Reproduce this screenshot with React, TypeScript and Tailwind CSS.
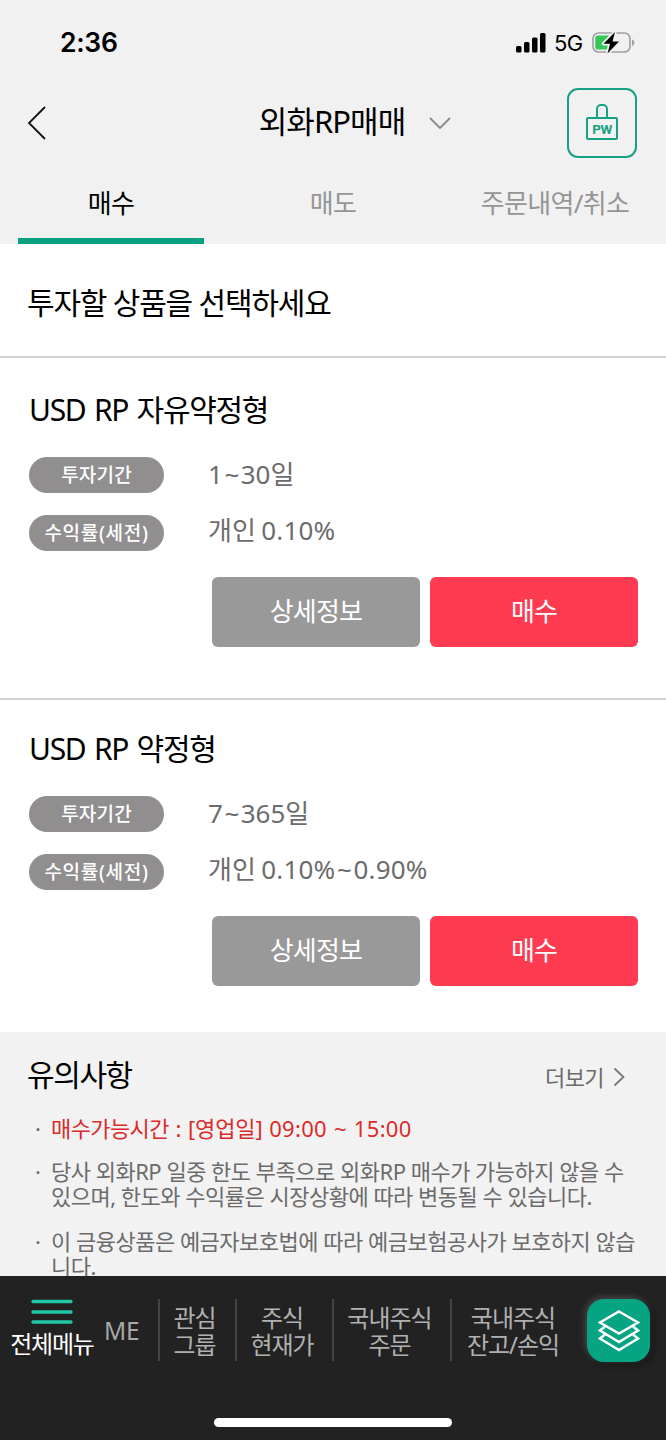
import { clsx } from "clsx";

const tabs = [
  { name: "매수", width: "w-[186px]", active: true },
  { name: "매도", width: "w-[258px]", active: false },
  { name: "주문내역/취소", width: "w-[186px]", active: false },
];

const products = [
  { name: "USD RP 자유약정형", period: "1~30일", rate: "개인 0.10%" },
  { name: "USD RP 약정형", period: "7~365일", rate: "개인 0.10%~0.90%" },
];

const shortcuts = [
  { lines: ["관심", "그룹"], width: "w-[77px] pr-[6px]" },
  { lines: ["주식", "현재가"], width: "w-[97px] pr-[5px]" },
  { lines: ["국내주식", "주문"], width: "w-[118px] pr-[5px]" },
  { lines: ["국내주식", "잔고/손익"], width: "w-[126px] pr-[2px]" },
];

function StatusBar() {
  return (
    <div className="flex h-[86px] items-center justify-between pr-[30px] pl-[60px] font-['Inter',sans-serif] text-black">
      <span className="pb-px text-[26.5px] font-semibold leading-none tracking-[-0.3px]">2:36</span>
      <div className="flex items-center">
        <svg width="30" height="20" viewBox="0 0 30 20" fill="currentColor">
          <rect x="0" y="13" width="5.5" height="6.5" rx="1.5" />
          <rect x="8" y="9" width="5.5" height="10.5" rx="1.5" />
          <rect x="16" y="4.5" width="5.5" height="15" rx="1.5" />
          <rect x="24" y="0" width="5.5" height="19.5" rx="1.5" />
        </svg>
        <span className="ml-[8px] w-[38px] text-[22px] leading-none tracking-[-0.6px]">5G</span>
        <svg width="44" height="24" viewBox="0 0 44 24" fill="none">
          <rect x="1" y="2" width="37" height="19" rx="5.5" stroke="#a0a0a0" strokeWidth="1.6" />
          <path d="M40 8.5v6.5c1.6-.6 2.3-1.8 2.3-3.2S41.6 9.1 40 8.5z" fill="#a0a0a0" />
          <rect x="3.2" y="4.5" width="16" height="14" rx="2.8" fill="#34c759" />
          <path d="M23 1 11.500 12.800H18L15.500 22.500 27 10.500H20.500L23 1z" fill="#000" stroke="#f1f1f1" strokeWidth="3.4" paintOrder="stroke" strokeLinejoin="round" />
        </svg>
      </div>
    </div>
  );
}

function Header() {
  return (
    <header className="flex h-[74px] items-center justify-between pr-[29px] pl-[27px]">
      <svg width="70" height="36" viewBox="0 0 70 36" fill="none" stroke="#111" strokeWidth="1.8">
        <path d="M18 2 2 18l16 16" />
      </svg>
      <h1 className="flex items-center pb-[4px] pl-[46px] text-[31px] leading-none tracking-[-0.9px] text-black">
        외화RP매매
        <svg className="mt-[4px] ml-[24px]" width="22" height="14" viewBox="0 0 22 14" fill="none" stroke="#8a8a8a" strokeWidth="1.8">
          <path d="m1 2 10 10L21 2" />
        </svg>
      </h1>
      <button className="flex size-[70px] items-center justify-center rounded-[11px] border-2 border-[#17a184]">
        <svg className="mb-[3px]" width="32" height="37" viewBox="0 0 32 37" fill="none" stroke="#17a184" strokeWidth="2">
          <path d="M11 14.5V6a4 4 0 0 1 4-4h2a4 4 0 0 1 4 4v8.5" />
          <rect x="1" y="15" width="30" height="21" rx="1" />
          <text x="16" y="30.5" textAnchor="middle" fontSize="13.5" fontWeight="700" letterSpacing="-0.4" fontFamily="Roboto, sans-serif" fill="#17a184" stroke="none">
            PW
          </text>
        </svg>
      </button>
    </header>
  );
}

function Tabs() {
  return (
    <nav className="flex h-[84px] px-[18px] text-[26px] tracking-[-0.7px]">
      {tabs.map((tab) => (
        <a
          key={tab.name}
          href="#"
          className={clsx(
            "flex items-center justify-center border-b-[6px] pt-[8px] leading-none whitespace-nowrap",
            tab.width,
            tab.active ? "border-[#0aa183] text-black" : "border-transparent text-[#959595]",
          )}
        >
          {tab.name}
        </a>
      ))}
    </nav>
  );
}

function Badge({ children }: { children: string }) {
  return (
    <span
      className={clsx(
        "flex h-9 w-[135px] items-center justify-center rounded-full bg-[#908e8f] text-[19px] font-medium leading-none text-white",
        children.length > 4 ? "tracking-[0.7px]" : "tracking-[0.2px]",
      )}
    >
      {children}
    </span>
  );
}

// the tilde gets a little room on both sides
function Range({ children }: { children: string }) {
  const [from, to] = children.split("~");
  return (
    <>
      {from}
      {to && <span className="mx-[1.5px]">~</span>}
      {to}
    </>
  );
}

function Product({ name, period, rate }: { name: string; period: string; rate: string }) {
  return (
    <section className="px-[29px] pt-[35px]">
      <h2 className="text-[30px] leading-[34px] tracking-[-1.3px] [word-spacing:2px] text-black">{name}</h2>
      <div className="mt-[30px] flex h-9 items-center">
        <Badge>투자기간</Badge>
        <span className="ml-[44px] pb-[2px] text-[26px] leading-none text-[#6c6c6c]">
          <Range>{period}</Range>
        </span>
      </div>
      <div className="mt-[22px] flex h-9 items-center">
        <Badge>{"수익률(세전)"}</Badge>
        <span className="ml-[44px] pb-[6px] text-[26px] leading-none tracking-[0.2px] [word-spacing:-2px] text-[#6c6c6c]">
          <Range>{rate}</Range>
        </span>
      </div>
      <div className="mt-[25.5px] -mr-px flex justify-end gap-[10px] text-[26px] leading-none tracking-[-0.8px] text-white">
        <button className="h-[70px] w-[208px] rounded-md bg-[#999] pb-[2px]">상세정보</button>
        <button className="h-[70px] w-[208px] rounded-md bg-[#ff3b52] pb-[2px]">매수</button>
      </div>
    </section>
  );
}

function Notice() {
  return (
    <section className="h-[244px] overflow-hidden bg-[#f2f2f2] text-[#6b6b6b]">
      <div className="flex items-center justify-between pt-[26px] pr-[41px] pl-[27px]">
        <h2 className="text-[30px] leading-[34px] tracking-[-1.4px] text-black">유의사항</h2>
        <a href="#" className="flex items-center pt-[3px] text-[22px] leading-none tracking-[-0.6px]">
          더보기
          <svg className="ml-[9px]" width="12" height="20" viewBox="0 0 12 20" fill="none" stroke="#777" strokeWidth="1.8">
            <path d="m1.5 1.5 9 8.5-9 8.5" />
          </svg>
        </a>
      </div>
      <ul className="mt-[24px] pl-[35px] text-[22px] leading-[25px] tracking-[-0.5px] whitespace-nowrap">
        <li className="flex text-[#dc2a2a]">
          <span className="w-4 text-[#666]">·</span>
          <p className="tracking-[-0.1px] [word-spacing:1px]">
            <span className="tracking-[-0.6px]">매수가능시간</span> : [영업일] <span className="tracking-[0.3px]">09:00 ~ 15:00</span>
          </p>
        </li>
        <li className="mt-[18px] flex">
          <span className="w-4">·</span>
          <p>
            당사 외화RP 일중 한도 부족으로 외화RP 매수가 가능하지 않을 수
            <br />
            있으며, 한도와 수익률은 시장상황에 따라 변동될 수 있습니다.
          </p>
        </li>
        <li className="mt-[20px] flex">
          <span className="w-4">·</span>
          <p>
            이 금융상품은 예금자보호법에 따라 예금보험공사가 보호하지 않습
            <br />
            니다.
          </p>
        </li>
      </ul>
    </section>
  );
}

function BottomBar() {
  return (
    <footer className="flex h-[164px] flex-col items-center bg-[#222]">
      <div className="flex w-full pt-[23px]">
        <a href="#" className="flex w-[104px] flex-col items-center text-[24px] leading-none tracking-[-1.2px] text-white">
          <svg width="42" height="26" viewBox="0 0 42 26" stroke="#1fc7a6" strokeWidth="3.4" strokeLinecap="round">
            <path d="M2 2.500h38M2 13h38M2 23h38" />
          </svg>
          <span className="mt-[7px]">전체메뉴</span>
        </a>
        <a href="#" className="flex h-[64px] w-[54px] items-center text-[24.5px] leading-none tracking-[-0.3px] text-[#a8a8a8]">ME</a>
        {shortcuts.map((item) => (
          <a
            key={item.lines.join("")}
            href="#"
            className={clsx(
              "flex h-[62px] flex-col items-center justify-center border-l-2 border-[#444] pt-[2px] text-[24px] leading-[27px] tracking-[-1px] whitespace-nowrap text-[#b0b0b0]",
              item.width,
            )}
          >
            <span>{item.lines[0]}</span>
            <span>{item.lines[1]}</span>
          </a>
        ))}
        <button className="ml-[11px] flex size-[63px] items-center justify-center rounded-[17px] bg-[#06a482] shadow-[-2px_-2px_7px_#4a4a4a,2px_2px_7px_#111]">
          <svg width="42" height="42" viewBox="0 0 42 42" fill="none" stroke="#fff" strokeWidth="2.4">
            <path d="M21 1.500 40 12.500 21 23.500 2 12.500z" />
            <path d="m7 16.500-5 4 19 11.500 19-11.500-5-4" />
            <path d="m7 24.500-5 4L21 40l19-11.500-5-4" />
          </svg>
        </button>
      </div>
      <div className="mt-[55px] h-[9px] w-[238px] rounded-full bg-white" />
    </footer>
  );
}

export default function App() {
  return (
    <div className="h-[1440px] w-[666px] overflow-hidden bg-white font-['Noto_Sans','Noto_Sans_CJK_KR',sans-serif]">
      <div className="h-[244px] bg-[#f1f1f1]">
        <StatusBar />
        <Header />
        <Tabs />
      </div>
      <main>
        <p className="h-[114px] border-b-2 border-[#d3d3d3] pt-[42px] pl-[27px] text-[30px] leading-[34px] tracking-[-1.2px] text-black">
          투자할 상품을 선택하세요
        </p>
        <div className="h-[340px]">
          <Product {...products[0]} />
        </div>
        <div className="h-[334px] border-t-2 border-[#d3d3d3]">
          <div className="-mt-[3px]">
            <Product {...products[1]} />
          </div>
        </div>
        <Notice />
      </main>
      <BottomBar />
    </div>
  );
}
